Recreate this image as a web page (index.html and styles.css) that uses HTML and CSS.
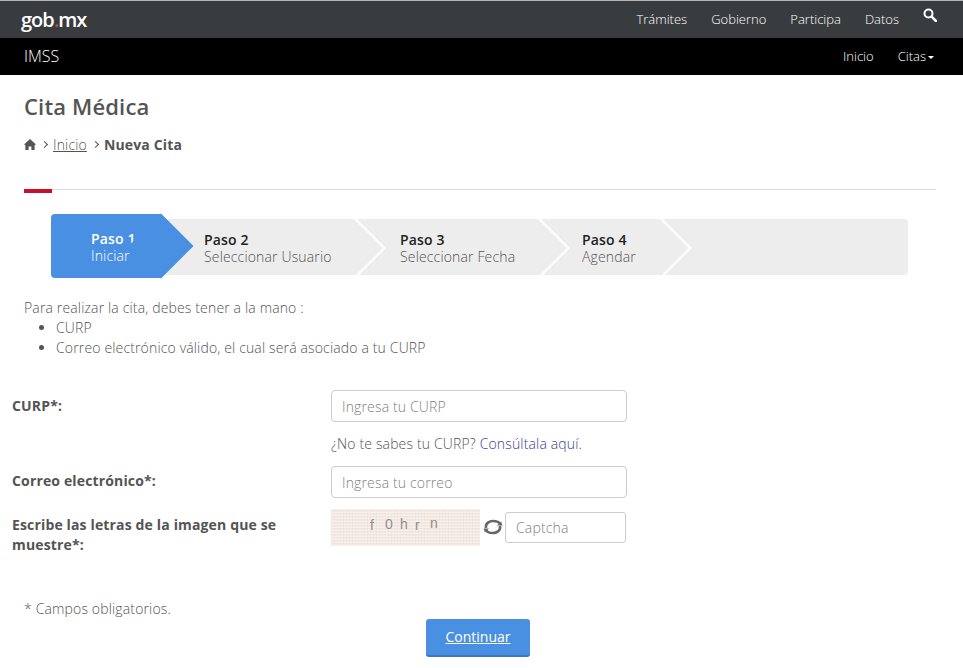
FILE: index.html
```html
<!DOCTYPE html>
<html lang="es">
<head>
<meta charset="UTF-8">
<meta name="viewport" content="width=device-width, initial-scale=1.0">
<title>Cita Médica</title>
<link rel="stylesheet" href="styles.css">
</head>
<body>
  <header class="top-bar">
    <a class="logo" href="#">gob<span class="logo-dot">.</span>mx</a>
    <nav class="top-nav">
      <a href="#">Trámites</a>
      <a href="#">Gobierno</a>
      <a href="#">Participa</a>
      <a href="#">Datos</a>
      <svg class="search-icon" viewBox="0 0 14 14" width="14" height="14">
        <circle cx="5.5" cy="5.5" r="4" fill="none" stroke="#fff" stroke-width="2"/>
        <path d="M8.6 8.6 L13 13" stroke="#fff" stroke-width="2.6" stroke-linecap="round"/>
      </svg>
    </nav>
  </header>
  <div class="sub-bar">
    <span class="brand">IMSS</span>
    <nav class="sub-nav">
      <a href="#">Inicio</a>
      <a href="#">Citas<span class="caret"></span></a>
    </nav>
  </div>

  <main class="content">
    <h1>Cita Médica</h1>
    <div class="breadcrumb">
      <svg class="home-icon" viewBox="0 0 12 11" width="12" height="11">
        <path d="M6 0 L12 5.6 L10.6 5.9 L10.6 11 L7.4 11 L7.4 7.4 L4.6 7.4 L4.6 11 L1.4 11 L1.4 5.9 L0 5.6 Z" fill="#545454"/>
      </svg>
      <span class="crumb-sep"></span>
      <a href="#">Inicio</a>
      <span class="crumb-sep"></span>
      <strong>Nueva Cita</strong>
    </div>
    <div class="divider"></div>

    <div class="steps">
      <div class="step step-active"><b>Paso 1</b><span>Iniciar</span></div>
      <div class="step step-2"><b>Paso 2</b><span>Seleccionar Usuario</span></div>
      <div class="step step-3"><b>Paso 3</b><span>Seleccionar Fecha</span></div>
      <div class="step step-4"><b>Paso 4</b><span>Agendar</span></div>
    </div>

    <div class="intro">
      <p>Para realizar la cita, debes tener a la mano :</p>
      <ul>
        <li>CURP</li>
        <li>Correo electrónico válido, el cual será asociado a tu CURP</li>
      </ul>
    </div>
  </main>

  <form class="form">
    <label class="field-label label-curp" for="curp">CURP*:</label>
    <div class="field">
      <input type="text" id="curp" placeholder="Ingresa tu CURP">
      <p class="hint">¿No te sabes tu CURP? <a href="#">Consúltala aquí.</a></p>
    </div>
    <label class="field-label label-mail" for="correo">Correo electrónico*:</label>
    <div class="field">
      <input type="text" id="correo" placeholder="Ingresa tu correo">
    </div>
    <label class="field-label label-captcha" for="captcha">Escribe las letras de la imagen que se muestre*:</label>
    <div class="captcha-row">
      <div class="captcha-img"><span>f</span><span class="up">0</span><span class="up">h</span><span>r</span><span class="up2">n</span></div>
      <svg class="refresh-icon" viewBox="0 0 20 16" width="20" height="16">
        <path d="M3 9 C2 4 7 2 10 2 C13 2 16 3 17 5" fill="none" stroke="#666" stroke-width="2.6"/>
        <path d="M17 7 C18 12 13 14 10 14 C7 14 4 13 3 11" fill="none" stroke="#666" stroke-width="2.6"/>
        <path d="M14 6.5 L19.5 6.5 L18 2.5 Z M6 9.5 L0.5 9.5 L2 13.5 Z" fill="#666"/>
      </svg>
      <input class="captcha-input" type="text" id="captcha" placeholder="Captcha">
    </div>
  </form>

  <p class="required-note">* Campos obligatorios.</p>
  <div class="actions">
    <a class="btn-primary" href="#">Continuar</a>
  </div>
</body>
</html>
```

FILE: styles.css
```css
* {
  box-sizing: border-box;
}
body {
  font-family: "Open Sans", sans-serif;
  font-size: 14px;
  font-weight: 300;
  letter-spacing: 0.15px;
  color: #545454;
  background-color: #fff;
  margin: 0;
  overflow: hidden;
}
a {
  color: inherit;
}

.top-bar {
  height: 38px;
  background-color: #393c3e;
  border-top: 1px solid #b5b5b5;
  display: flex;
  justify-content: space-between;
  padding: 0 26px 0 21px;
}
.logo {
  font-size: 20px;
  font-weight: 600;
  letter-spacing: -1px;
  color: #fff;
  text-decoration: none;
  line-height: 37px;
}
.logo-dot {
  color: #c2492f;
}
.top-nav {
  display: flex;
  gap: 24px;
  font-size: 13px;
  font-weight: 300;
  letter-spacing: 0;
  line-height: 36px;
}
.top-nav a {
  color: #fff;
  text-decoration: none;
}
.search-icon {
  margin-top: 7px;
}

.sub-bar {
  height: 37px;
  background-color: #000;
  color: #fff;
  display: flex;
  justify-content: space-between;
  align-items: center;
  padding: 0 29px 2px 24px;
}
.brand {
  font-size: 16px;
  letter-spacing: 0;
}
.sub-nav {
  display: flex;
  gap: 24px;
  font-size: 13px;
  font-weight: 300;
  letter-spacing: 0;
}
.sub-nav a {
  color: #fff;
  text-decoration: none;
}
.caret {
  display: inline-block;
  margin-left: 2px;
  vertical-align: middle;
  border-top: 3px solid #fff;
  border-left: 3px solid transparent;
  border-right: 3px solid transparent;
}

.content {
  padding: 0 27px 0 24px;
}
h1 {
  font-size: 22px;
  font-weight: 600;
  line-height: 30px;
  margin: 16px 0 0;
}
.breadcrumb {
  display: flex;
  align-items: center;
  margin-top: 13px;
  height: 20px;
}
.breadcrumb a {
  font-weight: 300;
  color: #545454;
}
.breadcrumb strong {
  font-weight: 700;
}
.crumb-sep {
  width: 5px;
  height: 5px;
  border-top: 1.5px solid #545454;
  border-right: 1.5px solid #545454;
  transform: rotate(45deg);
  margin: 1px 6px 0 6px;
}
.divider {
  position: relative;
  height: 1px;
  margin-top: 35px;
  background-color: #dcdcdc;
}
.divider::before {
  content: "";
  position: absolute;
  left: 0;
  top: 0;
  width: 28px;
  height: 4px;
  background-color: #c8102e;
}

.steps {
  display: flex;
  height: 56px;
  margin: 29px 28px 0 27px;
  background-color: #ededed;
  border-radius: 4px;
}
.step {
  position: relative;
  display: flex;
  flex-direction: column;
  justify-content: center;
  padding-top: 2px;
  line-height: 17px;
  color: #545454;
}
.step b {
  font-weight: 600;
  color: #222;
}
.step::after {
  content: "";
  position: absolute;
  top: 8px;
  right: -20px;
  width: 40px;
  height: 40px;
  border-top: 2px solid #fff;
  border-right: 2px solid #fff;
  transform: rotate(45deg);
}
.step-active {
  width: 110px;
  height: 64px;
  margin-top: -5px;
  padding-left: 40px;
  background-color: #4a90e2;
  border-radius: 4px 0 0 4px;
  color: #fff;
}
.step-active b {
  color: #fff;
}
.step-active::after {
  top: 9px;
  right: -23px;
  width: 46px;
  height: 46px;
  border: 0;
  background-color: #4a90e2;
}
.step-2 {
  width: 196px;
  padding-left: 43px;
}
.step-3 {
  width: 184px;
  padding-left: 43px;
}
.step-4 {
  width: 122px;
  padding-left: 41px;
}

.intro {
  margin-top: 23px;
  line-height: 20px;
}
.intro p {
  margin: 0;
}
.intro ul {
  margin: 0;
  padding-left: 32px;
}

.form {
  display: grid;
  grid-template-columns: 319px 296px;
  padding-left: 12px;
  margin-top: 32px;
}
.field-label {
  font-weight: 700;
  line-height: 20px;
}
.label-curp {
  padding-top: 6px;
}
.label-mail {
  padding-top: 5px;
}
.label-captcha {
  padding-top: 5px;
  padding-right: 30px;
  margin-top: 12px;
}
.field input,
.captcha-input {
  display: block;
  width: 100%;
  height: 32px;
  padding: 0 10px;
  border: 1px solid #ccc;
  border-radius: 4px;
  font: 300 14px "Open Sans", sans-serif;
  letter-spacing: 0.15px;
  color: #545454;
}
input::placeholder {
  color: #808080;
  opacity: 1;
}
.hint {
  margin: 12px 0 12px;
  line-height: 20px;
}
.hint a {
  color: #393c8e;
  text-decoration: none;
}
.captcha-row {
  display: flex;
  align-items: center;
  margin-top: 10px;
  height: 38px;
}
.captcha-img {
  width: 149px;
  height: 37px;
  display: flex;
  gap: 7px;
  padding: 8px 0 0 39px;
  font: 400 14px "Liberation Sans", sans-serif;
  letter-spacing: 0;
  color: #8f8f8f;
  background-color: #f5ebe5;
  background-image:
    repeating-linear-gradient(0deg, rgba(255,255,255,0.3) 0 1px, transparent 1px 2px, rgba(200,180,170,0.1) 2px 3px),
    repeating-linear-gradient(90deg, rgba(200,180,170,0.1) 0 1px, transparent 1px 3px);
}
.captcha-img span {
  width: 8px;
}
.captcha-img .up {
  margin-top: -1px;
}
.captcha-img .up2 {
  margin-top: -2px;
}
.refresh-icon {
  margin: 0 2px 0 3px;
}
.captcha-input {
  width: 121px;
  height: 31px;
  border-radius: 3px;
}

.required-note {
  margin: 44px 0 0 24px;
  line-height: 20px;
}
.actions {
  display: flex;
  justify-content: center;
  padding-right: 7px;
}
.btn-primary {
  width: 104px;
  height: 38px;
  line-height: 36px;
  text-align: center;
  color: #fff;
  font-weight: 400;
  letter-spacing: 0;
  background-color: #4a90e2;
  border-bottom: 2px solid #3a78c2;
  border-radius: 3px;
}
```
